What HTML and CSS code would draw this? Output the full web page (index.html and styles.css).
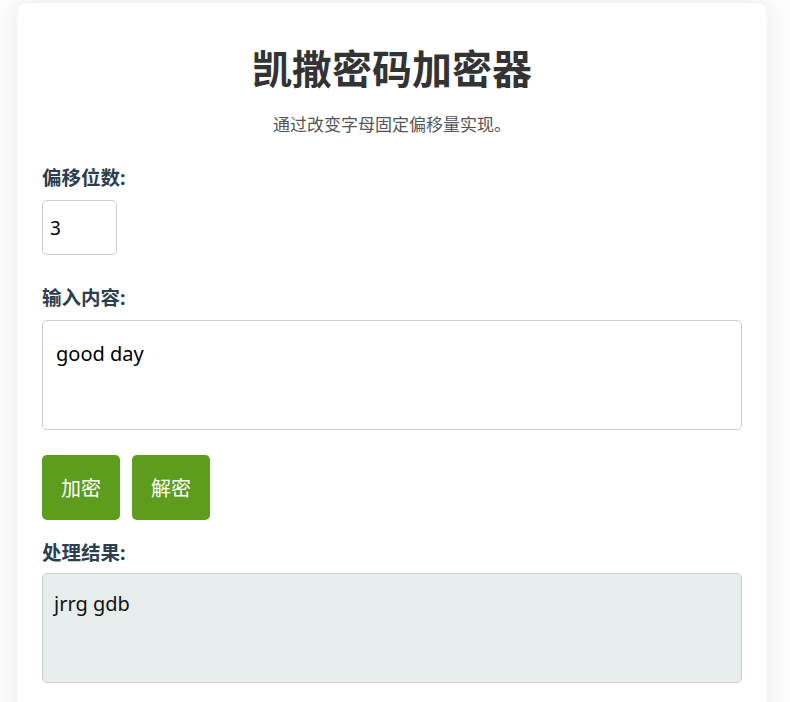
FILE: index.html
```html
<!DOCTYPE html>
<html lang="zh-CN">
<head>
    <meta charset="UTF-8">
    <meta name="viewport" content="width=device-width, initial-scale=1.0">
    <title>凯撒密码加密器</title>
    <link rel="stylesheet" href="styles.css">
</head>
<body>
    <div class="container">
        <h1>凯撒密码加密器</h1>
        <p class="subtitle">通过改变字母固定偏移量实现。</p>

        <div class="field">
            <label for="shift">偏移位数:</label>
            <input id="shift" type="number" value="3" class="shift-input">
        </div>

        <div class="field field-text">
            <label for="text">输入内容:</label>
            <textarea id="text" class="text-box">good day</textarea>
        </div>

        <div class="buttons">
            <button class="btn" id="encrypt">加密</button>
            <button class="btn" id="decrypt">解密</button>
        </div>

        <div class="field field-result">
            <label>处理结果:</label>
            <div class="result" id="result">jrrg gdb</div>
        </div>
    </div>

    <script>
        const shiftInput = document.getElementById('shift');
        const textInput = document.getElementById('text');
        const result = document.getElementById('result');

        function caesar(str, shift) {
            return str.replace(/[a-z]/gi, ch => {
                const base = ch <= 'Z' ? 65 : 97;
                return String.fromCharCode((ch.charCodeAt(0) - base + shift + 26 * 10) % 26 + base);
            });
        }

        document.getElementById('encrypt').addEventListener('click', () => {
            result.textContent = caesar(textInput.value, parseInt(shiftInput.value) || 0);
        });

        document.getElementById('decrypt').addEventListener('click', () => {
            result.textContent = caesar(textInput.value, -(parseInt(shiftInput.value) || 0));
        });
    </script>
</body>
</html>
```

FILE: styles.css
```css
body {
    margin: 0;
    padding: 3px 23px 0 17px;
    font-family: "Noto Sans", "Noto Sans CJK SC", sans-serif;
    background: #fcfcfc;
    color: #333;
}

.container {
    width: 700px;
    background: #fff;
    padding: 20px 25px 30px;
    border-radius: 10px;
    box-shadow: 0 0 20px rgba(0, 0, 0, 0.08);
}

h1 {
    margin: 18px 0 16px;
    font-size: 40px;
    line-height: 56px;
    text-align: center;
    color: #333;
    font-weight: bold;
}

.subtitle {
    margin: 0 0 29px;
    font-size: 17px;
    line-height: 24px;
    text-align: center;
    color: #555;
}

.field {
    margin-bottom: 31px;
}

.field-text {
    margin-bottom: 25px;
}

.field label {
    display: block;
    font-size: 19.5px;
    line-height: 24px;
    font-weight: bold;
    color: #2c3e50;
    margin-bottom: 10px;
}

.field-result label {
    margin-bottom: 8px;
}

.shift-input {
    box-sizing: border-box;
    width: 75px;
    height: 55px;
    padding: 0 7px;
    font-family: inherit;
    font-size: 19px;
    color: #000;
    border: 1px solid #ccc;
    border-radius: 5px;
    -moz-appearance: textfield;
}

.shift-input::-webkit-inner-spin-button,
.shift-input::-webkit-outer-spin-button {
    -webkit-appearance: none;
    margin: 0;
}

.text-box,
.result {
    box-sizing: border-box;
    display: block;
    width: 100%;
    height: 110px;
    padding: 20px 13px;
    font-family: inherit;
    font-size: 20px;
    line-height: 26px;
    color: #000;
    border: 1px solid #ccc;
    border-radius: 5px;
    resize: none;
}

.result {
    background: #e7ecec;
    padding: 17px 11px;
    color: #111;
}

.buttons {
    display: flex;
    gap: 12px;
    margin-bottom: 21px;
}

.btn {
    width: 78px;
    height: 65px;
    background: #5e9c1d;
    color: #fff;
    border: none;
    border-radius: 5px;
    font-family: inherit;
    font-size: 20px;
    cursor: pointer;
}

.btn:hover {
    background: #4f8616;
}
```
